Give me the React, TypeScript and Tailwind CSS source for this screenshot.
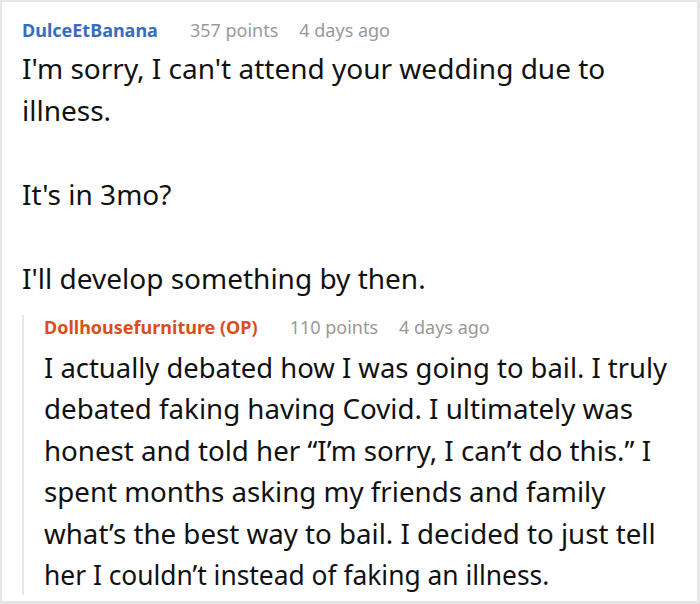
const replyLines: { text: string; fit: string }[] = [
  { text: 'I actually debated how I was going to bail. I truly', fit: 'scale-x-[0.99]' },
  { text: 'debated faking having Covid. I ultimately was', fit: 'scale-x-100' },
  { text: 'honest and told her “I’m sorry, I can’t do this.” I', fit: 'scale-x-100' },
  { text: 'spent months asking my friends and family', fit: 'scale-x-100' },
  { text: 'what’s the best way to bail. I decided to just tell', fit: 'scale-x-100' },
  { text: 'her I couldn’t instead of faking an illness.', fit: 'scale-x-[0.952]' },
];

function Meta({ name, color, points }: { name: string; color: string; points: number }) {
  return (
    <div className="flex items-baseline text-[18px] leading-6">
      <span className={`font-bold ${color}`}>{name}</span>
      <span className="text-[#999] ml-8">{points} points</span>
      <span className="text-[#999] ml-[21px]">4 days ago</span>
    </div>
  );
}

export default function App() {
  return (
    <div className="w-[700px] h-[604px] bg-white border-l-2 border-t-2 border-r-[3px] border-b-[3px] border-[#e6e6e6] overflow-hidden" style={{ fontFamily: '"Noto Sans", sans-serif' }}>
      <div className="pl-5 pt-[16px]">
        <Meta name="DulceEtBanana" color="text-[#3a6cbd]" points={357} />
        <div className="text-[28px] leading-[42px] text-[#111] mt-[5px] whitespace-nowrap">
          <p>I'm sorry, I can't attend your wedding due to<br />illness.</p>
          <p className="mt-[42px]">It's in 3mo?</p>
          <p className="mt-[42px]">I'll develop something by then.</p>
        </div>
        <div className="mt-[16px] border-l-2 border-[#e8e8e8] pl-5">
          <Meta name="Dollhousefurniture (OP)" color="text-[#d84f1c]" points={110} />
          <div className="text-[27.7px] leading-[41.4px] text-[#111] mt-[8px] -mb-3 whitespace-nowrap">
            {replyLines.map(l => (
              <div key={l.text} className={`origin-left ${l.fit}`}>{l.text}</div>
            ))}
          </div>
        </div>
      </div>
    </div>
  );
}
